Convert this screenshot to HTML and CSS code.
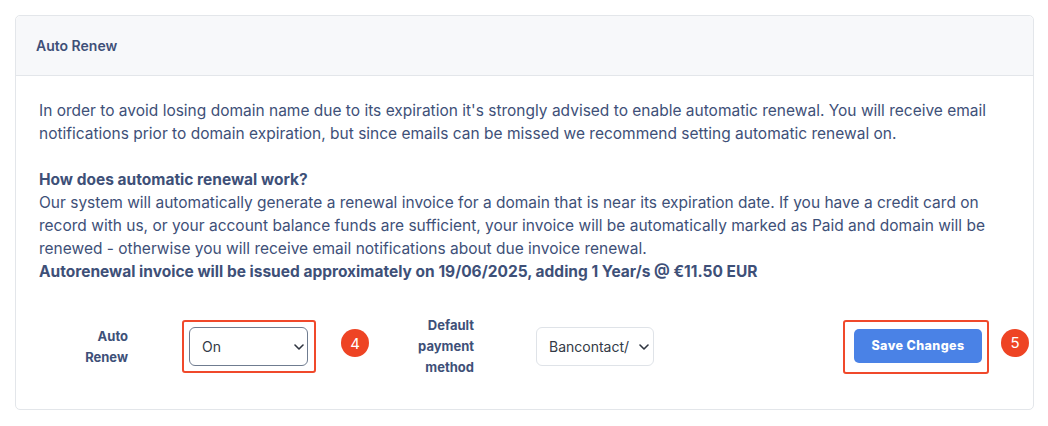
FILE: index.html
```html
<!DOCTYPE html>
<html lang="en">
<head>
<meta charset="utf-8">
<title>Auto Renew</title>
<link rel="stylesheet" href="styles.css">
</head>
<body>
<div class="card">
  <div class="card-header">Auto Renew</div>
  <div class="card-body">
    <p class="info">In order to avoid losing domain name due to its expiration it's strongly advised to enable automatic renewal. You will receive email notifications prior to domain expiration, but since emails can be missed we recommend setting automatic renewal on.</p>
    <p class="info"><strong>How does automatic renewal work?</strong><br>Our system will automatically generate a renewal invoice for a domain that is near its expiration date. If you have a credit card on record with us, or your account balance funds are sufficient, your invoice will be automatically marked as Paid and domain will be renewed - otherwise you will receive email notifications about due invoice renewal.<br><strong>Autorenewal invoice will be issued approximately on 19/06/2025, adding 1 Year/s @ €11.50 EUR</strong></p>
    <div class="form-row">
      <label class="label label-renew">Auto Renew</label>
      <div class="highlight hl-select">
        <div class="select select-focus"><span class="sel-text">On</span>
          <svg class="chev" width="10" height="6" viewBox="0 0 10 6"><path d="M1 1l4 4 4-4" fill="none" stroke="#2f3540" stroke-width="1.6" stroke-linecap="round" stroke-linejoin="round"/></svg>
        </div>
        <span class="badge badge-4">4</span>
      </div>
      <label class="label label-pay">Default payment method</label>
      <div class="select select-pay"><span class="sel-text">Bancontact/</span>
        <svg class="chev" width="10" height="6" viewBox="0 0 10 6"><path d="M1 1l4 4 4-4" fill="none" stroke="#2f3540" stroke-width="1.6" stroke-linecap="round" stroke-linejoin="round"/></svg>
      </div>
      <div class="highlight hl-btn">
        <button class="btn">Save Changes</button>
        <span class="badge badge-5">5</span>
      </div>
    </div>
  </div>
</div>
</body>
</html>
```
FILE: styles.css
```css
* { box-sizing: border-box; }
body {
  margin: 0;
  padding: 15px 14px 15px 15px;
  background: #ffffff;
  font-family: Inter, "Noto Sans", sans-serif;
  color: #3e5078;
}
.card {
  border: 1px solid #e3e6ea;
  border-radius: 5px;
}
.card-header {
  height: 60px;
  background: #f7f8fa;
  border-bottom: 1px solid #e3e6ea;
  border-radius: 5px 5px 0 0;
  padding: 0 20px;
  display: flex;
  align-items: center;
  font-size: 14px;
  font-weight: 600;
  color: #3e5078;
}
.card-body {
  padding: 23px 23px 31px 23px;
}
.info {
  margin: 0 0 23px 0;
  font-size: 15.5px;
  line-height: 23px;
}
.info strong { font-weight: 700; }
.info:last-of-type { margin-bottom: 0; }
.form-row {
  margin-top: 32px;
  display: flex;
  align-items: center;
  height: 63px;
}
.label {
  font-size: 13px;
  font-weight: 700;
  line-height: 21px;
  text-align: right;
  color: #3e5078;
}
.label-renew { width: 60px; margin-left: 29px; }
.label-pay { width: 70px; margin-left: 88px; }
.highlight {
  position: relative;
  border: 2px solid #f0492b;
  border-radius: 3px;
}
.hl-select { margin-left: 54px; padding: 5px 6px 5px 5px; }
.hl-btn { margin-left: 189px; padding: 7px 5px 9px 9px; }
.select {
  height: 39px;
  border-radius: 6px;
  display: flex;
  align-items: center;
  justify-content: space-between;
  font-size: 14px;
  color: #333a46;
  background: #fff;
}
.sel-text { white-space: nowrap; }
.select-focus {
  width: 119px;
  border: 1px solid #6f7c90;
  padding: 0 3px 0 12px;
}
.select-pay {
  width: 118px;
  margin-left: 62px;
  border: 1px solid #dfe3e8;
  padding: 0 4px 0 12px;
}
.chev { flex: none; }
.btn {
  display: block;
  width: 128px;
  height: 34px;
  border: none;
  border-radius: 5px;
  background: #4a82e6;
  color: #ffffff;
  font-family: Inter, "Noto Sans", sans-serif;
  font-size: 12.5px;
  font-weight: 800;
  letter-spacing: 0.4px;
  padding: 0;
}
.badge {
  position: absolute;
  width: 28px;
  height: 28px;
  border-radius: 50%;
  background: #ee4424;
  color: #ffffff;
  font-size: 15px;
  display: flex;
  align-items: center;
  justify-content: center;
  top: 7px;
}
.badge-4 { left: calc(100% + 27px); }
.badge-5 { left: calc(100% + 14px); }
```
